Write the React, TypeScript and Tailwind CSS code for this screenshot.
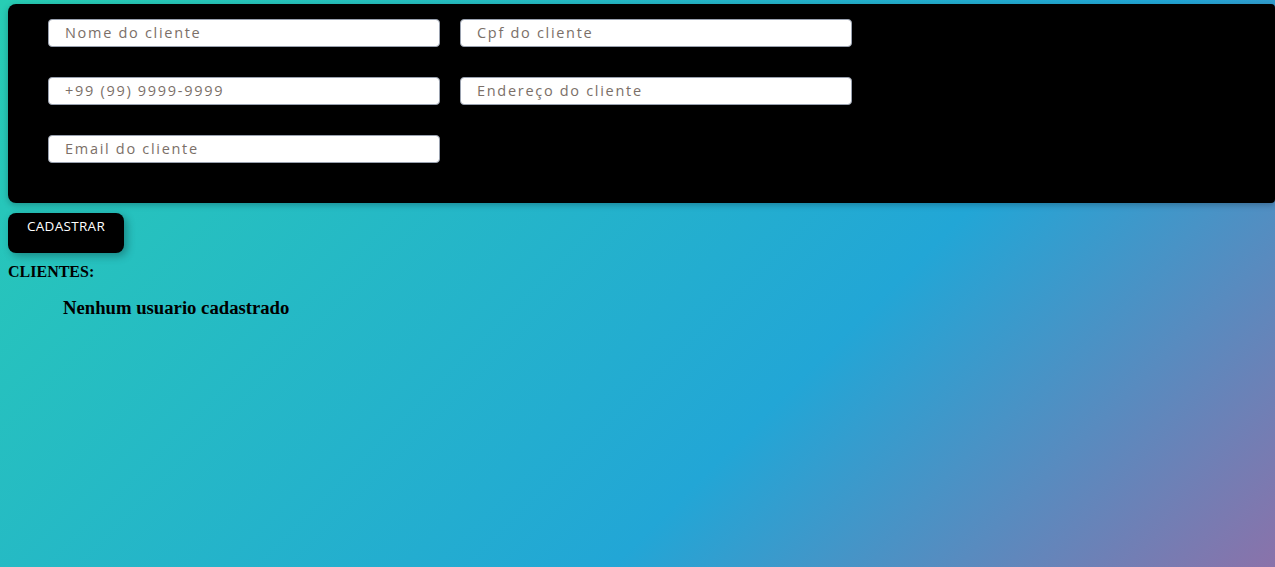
const ROWS = [
  ["Nome do cliente", "Cpf do cliente"],
  ["+99 (99) 9999-9999", "Endereço do cliente"],
  ["Email do cliente"],
];

export default function App() {
  return (
    <div className="min-h-screen w-full bg-[linear-gradient(135deg,#28cdb4_0%,#22a6d6_64%,#8a72aa_100%)] pt-1 pl-2">
      <div className="h-[199px] rounded-l-lg rounded-r-sm bg-black pt-[15px] pl-10 shadow-[0_2px_6px_rgba(0,0,0,0.25)]">
        <div className="flex flex-col gap-[30px]">
          {ROWS.map((row, i) => (
            <div key={i} className="flex gap-5">
              {row.map((ph) => (
                <input
                  key={ph}
                  placeholder={ph}
                  className="h-7 w-[392px] rounded border border-gray-400 bg-white pb-px pl-4 font-['Open_Sans',sans-serif] text-[14.5px] tracking-[1.7px] text-gray-700 outline-none placeholder:text-[#7b6f68]"
                />
              ))}
            </div>
          ))}
        </div>
      </div>
      <button className="mt-[10px] flex h-10 w-[116px] justify-center rounded-lg bg-black pt-[3px] font-['Open_Sans',sans-serif] text-[13.5px] tracking-[0.3px] text-white shadow-[3px_3px_8px_rgba(0,0,0,0.3)]">
        CADASTRAR
      </button>
      <p className="mt-[10px] font-['Liberation_Serif',serif] text-base leading-[18px] font-bold text-black">
        CLIENTES:
      </p>
      <h3 className="mt-4 ml-[55px] font-['Liberation_Serif',serif] text-[18.7px] leading-[22px] font-bold text-black">
        Nenhum usuario cadastrado
      </h3>
    </div>
  );
}
